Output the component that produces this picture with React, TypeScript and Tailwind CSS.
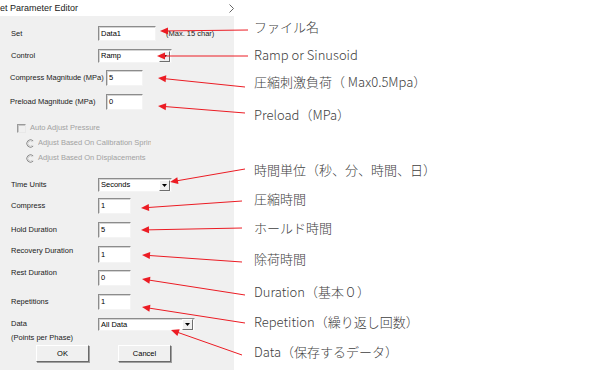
import type { ReactNode } from 'react'

const arrows: [number, number, number, number][] = [
  [248, 30, 160, 31],
  [248, 56, 157, 56],
  [245, 87, 158, 78],
  [245, 113, 158, 106],
  [245, 169, 170, 182],
  [242, 201, 141, 208],
  [242, 228, 141, 230],
  [242, 262, 142, 255],
  [245, 295, 142, 279],
  [245, 323, 142, 307],
  [242, 355, 171, 330],
]

const notes: { text: string; cls: string }[] = [
  { text: 'ファイル名', cls: 'mt-[17px]' },
  { text: 'Ramp or Sinusoid', cls: 'mt-[8px]' },
  { text: '圧縮刺激負荷（ Max0.5Mpa）', cls: 'mt-[7px]' },
  { text: 'Preload（MPa）', cls: 'mt-[13px]' },
  { text: '時間単位（秒、分、時間、日）', cls: 'mt-[35px]' },
  { text: '圧縮時間', cls: 'mt-[9px]' },
  { text: 'ホールド時間', cls: 'mt-[9px]' },
  { text: '除荷時間', cls: 'mt-[11px]' },
  { text: 'Duration（基本０）', cls: 'mt-[13px]' },
  { text: 'Repetition（繰り返し回数）', cls: 'mt-[10px]' },
  { text: 'Data（保存するデータ）', cls: 'mt-[10px]' },
]

function Arrow({ x1, y1, x2, y2 }: { x1: number; y1: number; x2: number; y2: number }) {
  const dx = x2 - x1
  const dy = y2 - y1
  const len = Math.hypot(dx, dy)
  const ux = dx / len
  const uy = dy / len
  const hl = 8
  const hw = 3.5
  const bx = x2 - ux * hl
  const by = y2 - uy * hl
  const pts = `${x2},${y2} ${bx - uy * hw},${by + ux * hw} ${bx + uy * hw},${by - ux * hw}`
  return (
    <g>
      <line x1={x1} y1={y1} x2={bx + ux * 2} y2={by + uy * 2} stroke="#ec1c24" strokeWidth={1} />
      <polygon points={pts} fill="#ec1c24" />
    </g>
  )
}

function Field({ children, className }: { children?: ReactNode; className: string }) {
  return (
    <div
      className={`h-full bg-white border border-t-[#8c8c8c] border-l-[#8c8c8c] border-r-[#f4f4f4] border-b-[#f4f4f4] shadow-[inset_1px_1px_0_#d4d4d4] flex items-center pl-[2px] text-black ${className}`}
    >
      {children}
    </div>
  )
}

function Combo({ value, className }: { value: string; className: string }) {
  return (
    <div
      className={`h-full bg-white border border-t-[#8c8c8c] border-l-[#8c8c8c] border-r-[#f4f4f4] border-b-[#f4f4f4] shadow-[inset_1px_1px_0_#d4d4d4] flex items-center pl-[2px] pr-[1px] text-black ${className}`}
    >
      <span className="flex-1">{value}</span>
      <div className="w-[11px] h-[11px] bg-[#f0f0f0] border border-t-white border-l-white border-r-[#6e6e6e] border-b-[#6e6e6e] flex items-center justify-center">
        <svg width="5" height="3" viewBox="0 0 5 3">
          <polygon points="0,0 5,0 2.5,3" fill="#000" />
        </svg>
      </div>
    </div>
  )
}

function Radio() {
  return (
    <svg width="9" height="9" viewBox="0 0 9 9" className="shrink-0">
      <path d="M7.2 1.8 A3.8 3.8 0 1 0 7.2 7.2" fill="none" stroke="#8e8e8e" strokeWidth="1" />
      <path d="M6.4 2.6 A2.7 2.7 0 1 0 6.4 6.4" fill="none" stroke="#c4c4c4" strokeWidth="1" />
    </svg>
  )
}

function Btn({ label }: { label: string }) {
  return (
    <div className="w-[53px] h-[17px] bg-[#f0f0f0] border border-t-white border-l-white border-r-[#6a6a6a] border-b-[#6a6a6a] shadow-[1px_1px_0_#a0a0a0] flex items-center justify-center text-black">
      {label}
    </div>
  )
}

export default function App() {
  return (
    <div className="relative w-[600px] h-[370px] overflow-hidden bg-white flex">
      {/* dialog */}
      <div className="w-[234px] h-full flex flex-col shrink-0 font-['Liberation_Sans',Arial,sans-serif] text-[7.5px] leading-[10px] text-[#1a1a1a]">
        <div className="h-[16px] bg-white flex items-center overflow-hidden relative">
          <span className="ml-[-6px] text-[9px] text-[#1a1a1a] whitespace-nowrap">Set Parameter Editor</span>
          <svg width="6" height="9" viewBox="0 0 6 9" className="absolute left-[229px] top-[4px]">
            <polyline points="0.5,0.5 4.5,4.5 0.5,8.5" fill="none" stroke="#555" strokeWidth="0.9" />
          </svg>
        </div>
        <div className="flex-1 bg-[#f0f0f0] flex flex-col">
          <div className="mt-[10px] h-[15px] flex items-center">
            <span className="pl-[11px] w-[98px]">Set</span>
            <Field className="w-[58px]">Data1</Field>
            <span className="ml-[10px]">(Max. 15 char)</span>
          </div>
          <div className="mt-[8px] h-[14px] flex items-center">
            <span className="pl-[11px] w-[98px]">Control</span>
            <Combo value="Ramp" className="w-[74px]" />
          </div>
          <div className="mt-[7px] h-[16px] flex items-center">
            <span className="pl-[10px] w-[106px] whitespace-nowrap">Compress Magnitude (MPa)</span>
            <Field className="w-[37px]">5</Field>
          </div>
          <div className="mt-[8px] h-[16px] flex items-center">
            <span className="pl-[10px] w-[106px] whitespace-nowrap">Preload Magnitude (MPa)</span>
            <Field className="w-[37px]">0</Field>
          </div>
          <div className="mt-[13px] h-[10px] flex items-center text-[#a2a2a2]">
            <div className="ml-[17px] w-[9px] h-[9px] border border-t-[#9a9a9a] border-l-[#9a9a9a] border-r-[#e8e8e8] border-b-[#e8e8e8] shadow-[inset_1px_1px_0_#c8c8c8]" />
            <span className="ml-[4px]">Auto Adjust Pressure</span>
          </div>
          <div className="mt-[5px] h-[10px] flex items-center text-[#a2a2a2]">
            <div className="ml-[26px]">
              <Radio />
            </div>
            <span className="ml-[3px] whitespace-nowrap overflow-hidden w-[113px]">Adjust Based On Calibration Spring</span>
          </div>
          <div className="mt-[5px] h-[10px] flex items-center text-[#a2a2a2]">
            <div className="ml-[26px]">
              <Radio />
            </div>
            <span className="ml-[3px] whitespace-nowrap">Adjust Based On Displacements</span>
          </div>
          <div className="mt-[15px] h-[14px] flex items-center">
            <span className="pl-[11px] w-[98px]">Time Units</span>
            <Combo value="Seconds" className="w-[74px]" />
          </div>
          <div className="mt-[6px] h-[16px] flex items-center">
            <span className="pl-[11px] w-[98px]">Compress</span>
            <Field className="w-[33px]">1</Field>
          </div>
          <div className="mt-[8px] h-[16px] flex items-center">
            <span className="pl-[11px] w-[98px]">Hold Duration</span>
            <Field className="w-[33px]">5</Field>
          </div>
          <div className="mt-[8px] h-[17px] flex items-start">
            <span className="pl-[11px] w-[98px]">Recovery Duration</span>
            <Field className="w-[33px]">1</Field>
          </div>
          <div className="mt-[7px] h-[16px] flex items-start">
            <span className="pl-[11px] w-[98px] mt-[-2px]">Rest Duration</span>
            <Field className="w-[33px]">0</Field>
          </div>
          <div className="mt-[8px] h-[16px] flex items-center">
            <span className="pl-[11px] w-[98px]">Repetitions</span>
            <Field className="w-[33px]">1</Field>
          </div>
          <div className="mt-[8px] h-[13px] flex items-start">
            <div className="pl-[11px] w-[98px] mt-[-1px] leading-[14px]">
              <div>Data</div>
              <div>(Points per Phase)</div>
            </div>
            <Combo value="All Data" className="w-[97px]" />
          </div>
          <div className="mt-[14px] flex gap-[29px] pl-[36px]">
            <Btn label="OK" />
            <Btn label="Cancel" />
          </div>
        </div>
      </div>

      {/* notes */}
      <div className="ml-[20px] flex flex-col font-['Noto_Sans_CJK_JP','Noto_Sans',sans-serif] font-light text-[13px] leading-[20px] text-[#404040]">
        {notes.map((n) => (
          <div key={n.text} className={`h-[20px] whitespace-nowrap ${n.cls}`}>
            {n.text}
          </div>
        ))}
      </div>

      <svg className="absolute inset-0 pointer-events-none" width="600" height="370" viewBox="0 0 600 370">
        {arrows.map(([x1, y1, x2, y2], i) => (
          <Arrow key={i} x1={x1} y1={y1} x2={x2} y2={y2} />
        ))}
      </svg>
    </div>
  )
}
